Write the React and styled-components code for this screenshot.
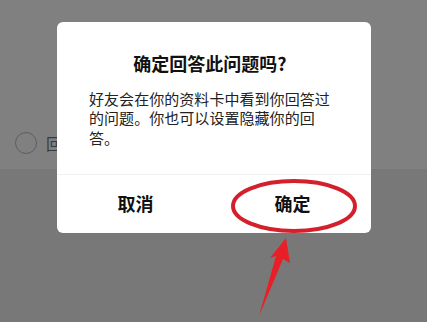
import styled, { createGlobalStyle } from "styled-components";

const GlobalStyle = createGlobalStyle`
  html, body {
    margin: 0;
    padding: 0;
    background: #787878;
    font-family: "Noto Sans CJK SC", "Noto Sans", sans-serif;
  }
`;

const Page = styled.div`
  position: relative;
  width: 427px;
  height: 322px;
  overflow: hidden;
  display: flex;
  flex-direction: column;
`;

const TopPanel = styled.div`
  height: 169px;
  background: #808080;
  display: flex;
  flex-direction: column;
  justify-content: flex-end;
  padding-bottom: 14px;
  box-sizing: border-box;
`;

const OptionRow = styled.div`
  display: flex;
  align-items: center;
  gap: 9px;
  padding-left: 15px;
`;

const Radio = styled.span`
  width: 20px;
  height: 20px;
  border-radius: 50%;
  border: 1.5px solid #5e5e5e;
`;

const OptionText = styled.span`
  font-size: 16px;
  color: #3a3a3a;
`;

const BottomPanel = styled.div`
  flex: 1;
  background: #787878;
`;

const Dialog = styled.div`
  position: absolute;
  left: 57px;
  top: 22px;
  width: 314px;
  height: 211px;
  background: #fff;
  border-radius: 6px;
  display: flex;
  flex-direction: column;
`;

const Title = styled.div`
  padding-top: 28px;
  font-size: 18px;
  line-height: 26px;
  font-weight: 700;
  color: #111;
  text-align: center;
  padding-right: 8px;
`;

const Body = styled.p`
  margin: 13px 0 0;
  padding: 0 36px 0 32px;
  font-size: 15px;
  line-height: 19.4px;
  letter-spacing: 0.05px;
  color: #222;
`;

const Actions = styled.div`
  margin-top: auto;
  height: 58px;
  border-top: 1px solid #f0f0f0;
  display: grid;
  grid-template-columns: 1fr 1fr;
`;

const ActionButton = styled.button`
  border: none;
  background: transparent;
  font-family: inherit;
  font-size: 18px;
  font-weight: 700;
  color: #111;
  padding: 0 0 2px;
`;

const Annotation = styled.svg`
  position: absolute;
  left: 0;
  top: 0;
  pointer-events: none;
`;

export default function App() {
  return (
    <>
      <GlobalStyle />
      <Page>
        <TopPanel>
          <OptionRow>
            <Radio />
            <OptionText>回答问题</OptionText>
          </OptionRow>
        </TopPanel>
        <BottomPanel />
        <Dialog>
          <Title>确定回答此问题吗?</Title>
          <Body>好友会在你的资料卡中看到你回答过的问题。你也可以设置隐藏你的回答。</Body>
          <Actions>
            <ActionButton>取消</ActionButton>
            <ActionButton>确定</ActionButton>
          </Actions>
        </Dialog>
        <Annotation width="427" height="322" viewBox="0 0 427 322">
          <ellipse cx="294" cy="206" rx="61" ry="25" fill="none" stroke="#d3202a" strokeWidth="4" />
          <polygon points="286,238 290,263 283,259 259,316 276,256 270,258" fill="#e81f26" />
        </Annotation>
      </Page>
    </>
  );
}
